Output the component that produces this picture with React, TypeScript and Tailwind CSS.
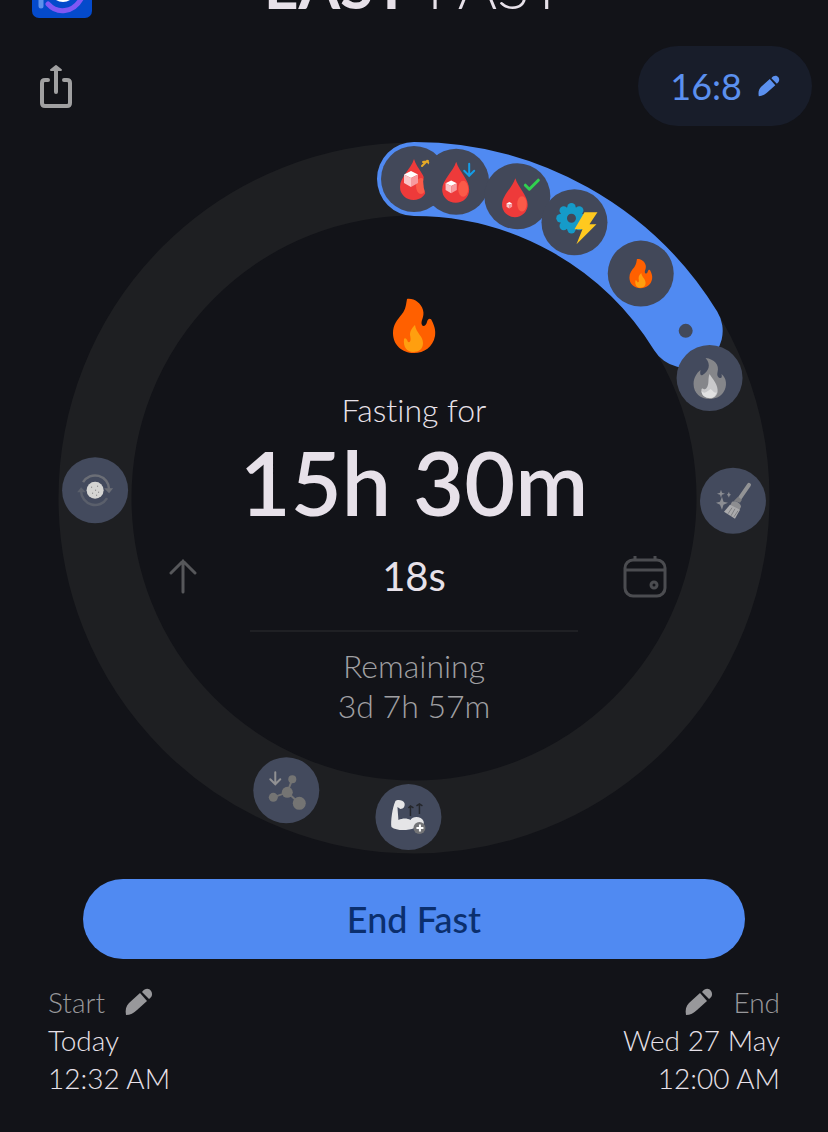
import type { ReactNode } from 'react';

const RADIUS = 319;
const PROGRESS_ANGLE = 58.4;

type Stage = {
    id: string;
    angle: number;
    icon: ReactNode;
};

// angle is measured clockwise from the top of the dial
const pointAt = (angle: number) => {
    const rad = (angle * Math.PI) / 180;
    return { x: RADIUS * Math.sin(rad), y: -RADIUS * Math.cos(rad) };
};

function Drop() {
    return (
        <>
            <path d="M0 -20C3 -10 13 -2 13 8A13.500 13 0 0 1 -14 8C-14 -2 -3 -10 0 -20Z" fill="#ee3a3a" />
            <ellipse cx="7" cy="7" rx="5" ry="8" fill="#fb5a48" />
        </>
    );
}

function Cube() {
    return (
        <>
            <path d="M0 -8L7 -4.500L0 -1L-7 -4.500Z" fill="#ffffff" />
            <path d="M-7 -4.500L0 -1V8L-7 4Z" fill="#fbc4c6" />
            <path d="M7 -4.500L0 -1V8L7 4Z" fill="#f79a9e" />
        </>
    );
}

function FlameShape() {
    return (
        <>
            <path
                d="M-7 -27C0 -28 7 -23 9 -16C11 -9 6 -5 8 -1C9 1 12 0 13 -4C14 -8 17 -8 18 -5C20 -1 22 4 21 10C19 21 10 27 0 27C-12 27 -21 19 -21 7C-21 -1 -17 -6 -12 -12C-8 -17 -8 -22 -7 -27Z"
                fill="#ff6000"
            />
            <path
                d="M1 -1C2 7 9 10 9 17C9 23 5 26 -1 26C-7 26 -11 21 -10 13C-9 11 -7 13 -6 16C-3 17 -3 13 -4 9C-4 4 -1 1 1 -1Z"
                fill="#ff9f0f"
            />
        </>
    );
}

const stages: Stage[] = [
    {
        id: 'sugar-rise',
        angle: 0,
        icon: (
            <>
                <Drop />
                <g transform="translate(-3 0)"><Cube /></g>
                <path d="M8 -13L13 -18L16 -14M9 -17L14 -18" fill="none" stroke="#e5aa27" strokeWidth="2" strokeLinecap="round" />
            </>
        ),
    },
    {
        id: 'sugar-drop',
        angle: 7.6,
        icon: (
            <>
                <Drop />
                <g transform="translate(-5 5) scale(0.8)"><Cube /></g>
                <path d="M13 -18V-7M8 -11L13 -6L18 -11" fill="none" stroke="#159ce6" strokeWidth="2" strokeLinecap="round" />
            </>
        ),
    },
    {
        id: 'sugar-normal',
        angle: 18.9,
        icon: (
            <>
                <g transform="translate(-2 1) scale(0.95)"><Drop /></g>
                <g transform="translate(-8 9) scale(0.4)"><Cube /></g>
                <path d="M8 -11L12 -7L21 -16" fill="none" stroke="#30d14f" strokeWidth="3" strokeLinecap="round" strokeLinejoin="round" />
            </>
        ),
    },
    {
        id: 'metabolism',
        angle: 30.2,
        icon: (
            <>
                <g transform="translate(-3 -4)">
                    {[0, 45, 90, 135, 180, 225, 270, 315].map((turn) => (
                        <circle key={turn} cx="0" cy="-11" r="4.200" fill="#159bc9" transform={`rotate(${turn})`} />
                    ))}
                    <circle r="8" fill="none" stroke="#159bc9" strokeWidth="7" />
                </g>
                <path d="M10 -10H23L15 2H22L2 22L8 7H0Z" fill="#ffc91f" />
            </>
        ),
    },
    {
        id: 'fat-burning',
        angle: 45.3,
        icon: <g transform="scale(0.54)"><FlameShape /></g>,
    },
    {
        id: 'ketosis',
        angle: 67.9,
        icon: (
            <>
                <path
                    d="M-4 -20C5 -19 10 -13 8 -6C7 -2 9 0 11 0C13 0 12 -3 12 -4C17 0 18 8 14 14C11 19 5 21 0 21C-9 21 -16 15 -16 6C-16 0 -13 -5 -9 -8C-10 -4 -9 -2 -7 -3C-1 -7 2 -13 -4 -20Z"
                    fill="#85868a"
                />
                <path d="M0 -4C3 1 9 7 8 14C7 19 3 21 -1 20C-6 19 -9 15 -8 11C-7 9 -5 13 -3 10C0 6 -2 1 0 -4Z" fill="#c9c9cb" />
                <path d="M-8 13C-5 17 -2 13 1 11C4 13 5 16 7 14C6 19 3 20 0 20C-5 20 -8 17 -8 13Z" fill="#e2e2e2" />
            </>
        ),
    },
    {
        id: 'autophagy',
        angle: 90.5,
        icon: (
            <>
                <path d="M16 -16L7 -3" stroke="#929395" strokeWidth="4" strokeLinecap="round" />
                <path d="M5 -4L9 -1L7 2L1 0Z" fill="#7c7d80" />
                <path d="M-1 1C2 -1 8 2 8 6L6 10L-3 5Z" fill="#8c8d90" />
                <path d="M-3 4L7 9L2 18L-9 11Z" fill="#aaaaac" />
                <path d="M-1 7L-5 13M2 8L-2 15M5 10L1 16" stroke="#7f8083" />
                <path d="M-11 -4L-9.500 1L-5 2L-9.500 4L-11 9L-13 4L-17 2L-13 1Z" fill="#8a8c92" />
                <path d="M-12 -11L-11 -8L-8 -7L-11 -6L-12 -3L-13 -6L-16 -7L-13 -8Z" fill="#8a8c92" />
                <path d="M-4 -9L-3.500 -7L-2 -6L-3.500 -5L-4 -3L-5 -5L-6 -6L-5 -7Z" fill="#8a8c92" />
            </>
        ),
    },
    {
        id: 'muscle',
        angle: 181,
        icon: (
            <>
                <path
                    d="M-13 -16C-11 -18 -5 -17 -4 -14C-3 -11 -5 -8 -8 -8L-11 -10L-10 3C-6 1 -1 1 2 3C4 -1 13 -1 15 4C17 9 11 12 6 11C-1 14 -12 14 -17 10C-18 5 -16 -10 -13 -16Z"
                    fill="#e5e5e7"
                />
                <path d="M2 -1V-11M0 -9L2 -11L5 -9M11 -3V-13M8 -11L11 -13L14 -11" fill="none" stroke="#25272c" strokeWidth="1.500" />
                <circle cx="11" cy="11" r="6" fill="#737477" />
                <path d="M8 11H15M11.500 7.500V14.500" stroke="#ffffff" strokeWidth="2" />
            </>
        ),
    },
    {
        id: 'hormones',
        angle: 203.6,
        icon: (
            <>
                <path d="M-13 7L1 2L6 -11M1 2L13 13" fill="none" stroke="#737373" strokeWidth="2" />
                <circle cx="-13" cy="7" r="4.500" fill="#747473" />
                <circle cx="1" cy="2" r="5.500" fill="#747473" />
                <circle cx="6" cy="-11" r="4" fill="#747473" />
                <circle cx="13" cy="13" r="6.500" fill="#747473" />
                <path d="M-11 -18V-7M-16 -11L-11 -6L-6 -11" fill="none" stroke="#919193" strokeWidth="2" strokeLinecap="round" />
            </>
        ),
    },
    {
        id: 'renewal',
        angle: 271.4,
        icon: (
            <>
                <path d="M-12 -8A14 14 0 0 1 14 -1" fill="none" stroke="#6b6e76" strokeWidth="2.500" />
                <path d="M9 -2H18L14 3Z" fill="#6b6e76" />
                <path d="M12 8A14 14 0 0 1 -14 1" fill="none" stroke="#5a5f6b" strokeWidth="2.500" />
                <path d="M-18 2H-9L-14 -3Z" fill="#5a5f6b" />
                <circle r="8.500" fill="#d5d5d3" />
                <path d="M-4 -3h1M2 -4h1M3 2h1M-3 3h1M0 0h1M1 5h1" stroke="#77787a" strokeWidth="1" />
            </>
        ),
    },
];

function Pencil({ className }: { className: string }) {
    return (
        <svg viewBox="0 0 28 28" className={className} fill="currentColor" aria-hidden="true">
            <path d="M1 27C0 22 1 18 4 15L15 5L22 13L12 22C9 25 5 27 1 27Z" />
            <path d="M17 4C20 0 24 0 26 3C28 6 27 9 24 11Z" />
        </svg>
    );
}

function Dial() {
    const end = pointAt(PROGRESS_ANGLE);
    return (
        <svg viewBox="-356 -356 712 712" className="w-full [grid-area:1/1]" aria-hidden="true">
            <circle r={RADIUS} fill="none" stroke="#1e1f22" strokeWidth="73" />
            <path
                d={`M0 ${-RADIUS}A${RADIUS} ${RADIUS} 0 0 1 ${end.x} ${end.y}`}
                fill="none"
                stroke="#508af2"
                strokeWidth="74"
                strokeLinecap="round"
            />
            <circle cx={end.x} cy={end.y} r="7" fill="#42495a" />
            {stages.map((stage) => {
                const { x, y } = pointAt(stage.angle);
                return (
                    <g key={stage.id} transform={`translate(${x} ${y})`}>
                        <circle r="33" fill={stage.angle < PROGRESS_ANGLE ? '#424859' : '#434a5d'} />
                        {stage.icon}
                    </g>
                );
            })}
        </svg>
    );
}

export default function App() {
    return (
        <main className="min-h-screen overflow-hidden bg-[#121318] pb-9 font-['Lato','Open_Sans',sans-serif] text-[#e7e1e9] [font-variant-ligatures:none]">
            {/* Scrolled header, only its lower edge is in view */}
            <header className="grid h-[18px] grid-cols-[60px_1fr_60px] content-end items-end px-8">
                <svg viewBox="0 0 60 60" className="size-[60px]" aria-hidden="true">
                    <rect width="60" height="60" rx="7" fill="#044acb" />
                    <path d="M9 36V48" stroke="#5c91ec" strokeWidth="5" strokeLinecap="round" />
                    <path d="M16 46C25 56 41 55 49 41" fill="none" stroke="#8058f4" strokeWidth="5" strokeLinecap="round" />
                    <circle cx="31" cy="31" r="13" fill="#ffffff" />
                </svg>
                <h1 className="text-center text-[60px] leading-[64px] font-light whitespace-nowrap">
                    <span className="font-bold">EASY</span> FAST
                </h1>
            </header>

            <div className="mt-7 flex items-center justify-between pr-4 pl-10">
                <button type="button" aria-label="Share" className="text-[#a0a0a1]">
                    <svg viewBox="0 0 32 44" className="h-11 w-8" fill="none" stroke="currentColor" strokeWidth="4" strokeLinecap="round" strokeLinejoin="round">
                        <path d="M8 16H5Q2 16 2 19V39Q2 42 5 42H27Q30 42 30 39V19Q30 16 27 16H24M16 28V5" />
                        <path d="M11 6L16 2L21 6Z" strokeWidth="2" fill="currentColor" />
                    </svg>
                </button>
                <button type="button" className="flex h-20 items-center gap-4 rounded-full bg-[#181d2a] px-8 text-4xl text-[#5b90ef]">
                    16:8
                    <Pencil className="size-[22px]" />
                </button>
            </div>

            <section className="mt-4 grid px-[58px]">
                <Dial />
                <div className="flex flex-col items-center pt-[156px] [grid-area:1/1]">
                    <svg viewBox="-22 -28 44 56" className="h-14 w-11" aria-hidden="true">
                        <FlameShape />
                    </svg>
                    <p className="mt-9 text-[32px] leading-10 font-light">Fasting for</p>
                    <p className="text-[88px] leading-[104px] font-semibold whitespace-nowrap">15h 30m</p>
                    <div className="mt-4 flex w-full items-center justify-between px-[103px]">
                        <button type="button" aria-label="Scroll up" className="flex w-11 justify-center text-[#56575a]">
                            <svg viewBox="0 0 28 36" className="h-9 w-7" fill="none" stroke="currentColor" strokeWidth="3" strokeLinecap="round">
                                <path d="M14 34V3M2 15L14 3L26 15" />
                            </svg>
                        </button>
                        <p className="text-[40px] leading-[52px]">18s</p>
                        <button type="button" aria-label="Calendar" className="flex w-11 justify-center text-[#4b4c50]">
                            <svg viewBox="0 0 44 44" className="size-11" fill="none" stroke="currentColor" strokeWidth="3">
                                <rect x="2" y="6" width="40" height="36" rx="8" />
                                <path d="M2 16H42M12 6V2M32 6V2" />
                                <circle cx="31" cy="31" r="3" />
                            </svg>
                        </button>
                    </div>
                    <hr className="mt-7 w-[328px] border-t-2 border-[#1f2024]" />
                    <p className="mt-[14px] text-center text-[32px] leading-10 font-light text-[#a0a0a3]">
                        Remaining
                        <br />
                        3d 7h 57m
                    </p>
                </div>
            </section>

            <div className="mt-[25px] px-[83px]">
                <button type="button" className="h-20 w-full rounded-full bg-[#508af2] text-4xl font-medium text-[#0b2f6e]">
                    End Fast
                </button>
            </div>

            <footer className="mt-6 flex justify-between px-12 text-[28px] leading-[38px] font-light">
                <div>
                    <button type="button" className="flex items-center gap-5 text-[#98989b]">
                        Start
                        <Pencil className="size-7" />
                    </button>
                    <p>Today</p>
                    <p>12:32 AM</p>
                </div>
                <div className="flex flex-col items-end">
                    <button type="button" className="flex items-center gap-5 text-[#98989b]">
                        <Pencil className="size-7" />
                        End
                    </button>
                    <p>Wed 27 May</p>
                    <p>12:00 AM</p>
                </div>
            </footer>
        </main>
    );
}
